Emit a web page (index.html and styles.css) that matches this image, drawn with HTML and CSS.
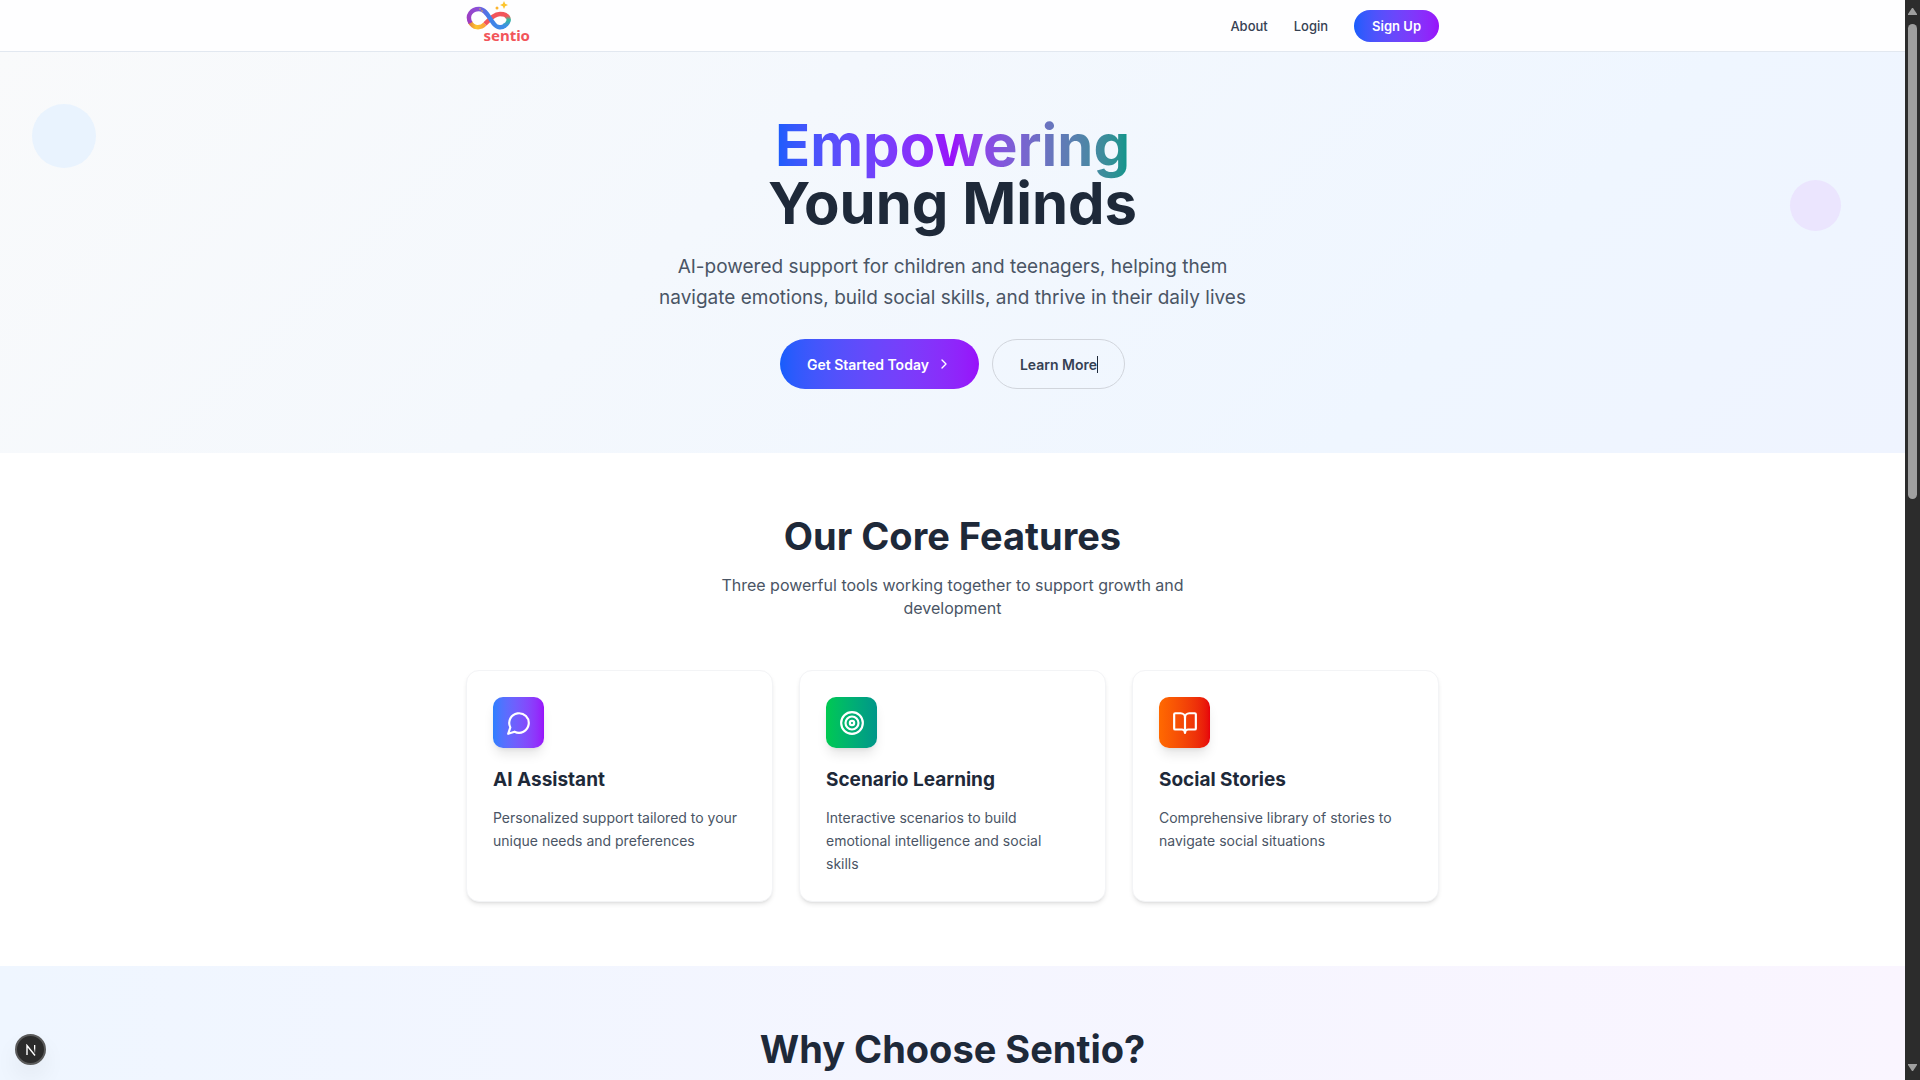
FILE: index.html
```html
<!DOCTYPE html>
<html lang="en">
<head>
<meta charset="utf-8">
<meta name="viewport" content="width=device-width, initial-scale=1">
<title>Sentio</title>
<link rel="stylesheet" href="styles.css">
</head>
<body>
<div class="page">
  <header class="header">
    <div class="container header-row">
      <a class="logo" href="#" aria-label="Sentio home">
        <svg class="logo-mark" viewBox="0 0 48 32" aria-hidden="true">
          <defs>
            <linearGradient id="lg-purple" x1="0" y1="1" x2="1" y2="0"><stop offset="0" stop-color="#a03cc0"/><stop offset="1" stop-color="#8a4fd8"/></linearGradient>
            <linearGradient id="lg-gold" x1="0" y1="0" x2="1" y2="0"><stop offset="0" stop-color="#e8873c"/><stop offset="0.4" stop-color="#fcc52f"/><stop offset="1" stop-color="#f9a03a"/></linearGradient>
            <linearGradient id="lg-blue" x1="0" y1="0" x2="1" y2="0"><stop offset="0" stop-color="#7a58dc"/><stop offset="0.4" stop-color="#3f7fe8"/><stop offset="1" stop-color="#3d8fe6"/></linearGradient>
            <linearGradient id="lg-teal" x1="0" y1="0" x2="0" y2="1"><stop offset="0" stop-color="#f0605a"/><stop offset="0.35" stop-color="#35b99a"/><stop offset="1" stop-color="#3d8fe6"/></linearGradient>
          </defs>
          <g fill="none" stroke-width="4.400">
            <path d="M4 22C7 28 14 29 19 24" stroke="url(#lg-gold)"/>
            <path d="M19 24C24 19 28 14 34 14C38 14 41 15 42 18" stroke="#f2555a"/>
            <path d="M4.500 23C0 15 6 9 13 9" stroke="url(#lg-purple)"/>
            <path d="M13 9C20 9 23 18 28 24C31 28 36 28 39 25.500" stroke="url(#lg-blue)"/>
            <path d="M41 16C44 19 43 23 38 26" stroke="url(#lg-teal)"/>
          </g>
          <path fill="#fcc52f" d="M38 1l1.200 2.800 2.800 1.200-2.800 1.200-1.200 2.800-1.200-2.800-2.800-1.200 2.800-1.200z"/>
          <circle cx="31" cy="8" r="1.500" fill="#fcb52f"/>
          <circle cx="14" cy="9" r="0.700" fill="#fcc52f"/>
          <circle cx="16" cy="11" r="0.700" fill="#fcc52f"/>
        </svg>
        <span class="logo-text">sentio</span>
      </a>
      <nav class="nav">
        <a href="#about">About</a>
        <a href="#login">Login</a>
        <a class="signup" href="#signup">Sign Up</a>
      </nav>
    </div>
  </header>

  <main>
    <section class="hero">
      <span class="bubble bubble-blue"></span>
      <span class="bubble bubble-purple"></span>
      <div class="container">
        <h1><span class="gradient-word">Empowering</span><br>Young Minds</h1>
        <p class="lead">AI-powered support for children and teenagers, helping them navigate emotions, build social skills, and thrive in their daily lives</p>
        <div class="actions">
          <button class="btn btn-primary" type="button">Get Started Today
            <svg class="chevron" viewBox="0 0 24 24" aria-hidden="true"><path d="m9 18 6-6-6-6"/></svg>
          </button>
          <button class="btn btn-outline" type="button"><span class="caret">Learn More</span></button>
        </div>
      </div>
    </section>

    <section class="features">
      <div class="container">
        <h2>Our Core Features</h2>
        <p class="sub">Three powerful tools working together to support growth and development</p>
        <div class="cards">
          <article class="card">
            <div class="icon icon-assistant"><svg viewBox="0 0 24 24" aria-hidden="true"><path d="M7.900 20A9 9 0 1 0 4 16.100L2 22Z"/></svg></div>
            <h3>AI Assistant</h3>
            <p>Personalized support tailored to your unique needs and preferences</p>
          </article>
          <article class="card">
            <div class="icon icon-scenario"><svg viewBox="0 0 24 24" aria-hidden="true"><circle cx="12" cy="12" r="10"/><circle cx="12" cy="12" r="6"/><circle cx="12" cy="12" r="2"/></svg></div>
            <h3>Scenario Learning</h3>
            <p>Interactive scenarios to build emotional intelligence and social skills</p>
          </article>
          <article class="card">
            <div class="icon icon-stories"><svg viewBox="0 0 24 24" aria-hidden="true"><path d="M12 7v14"/><path d="M3 18a1 1 0 0 1-1-1V4a1 1 0 0 1 1-1h5a4 4 0 0 1 4 4 4 4 0 0 1 4-4h5a1 1 0 0 1 1 1v13a1 1 0 0 1-1 1h-6a3 3 0 0 0-3 3 3 3 0 0 0-3-3z"/></svg></div>
            <h3>Social Stories</h3>
            <p>Comprehensive library of stories to navigate social situations</p>
          </article>
        </div>
      </div>
    </section>

    <section class="why">
      <div class="container">
        <h2>Why Choose Sentio?</h2>
      </div>
    </section>
  </main>
</div>

<div class="scrollbar" aria-hidden="true">
  <svg class="arrow" viewBox="0 0 9 8"><path d="M4 0h1l4 6v1H0V6z"/></svg>
  <div class="track"><div class="thumb"></div></div>
  <svg class="arrow" viewBox="0 0 9 8"><path d="M0 0h9v1L5 7H4L0 1z"/></svg>
</div>

<button class="dev-badge" type="button" aria-label="Open developer tools">
  <svg viewBox="0 0 12 12" aria-hidden="true">
    <defs><linearGradient id="fade" x1="0" y1="0" x2="0" y2="1"><stop offset="0.400" stop-color="#fff"/><stop offset="1" stop-color="#fff" stop-opacity="0.100"/></linearGradient></defs>
    <path d="M2 11V1.500L10 11.500" fill="none" stroke="#fff" stroke-width="1.400"/>
    <rect x="9" y="1" width="1.300" height="8" fill="url(#fade)"/>
  </svg>
</button>
</body>
</html>
```
FILE: styles.css
```css
* { box-sizing: border-box; }

body {
  margin: 0;
  display: flex;
  height: 100vh;
  overflow: hidden;
  font-family: Inter, "Liberation Sans", sans-serif;
  color: #1e2939;
  background: #fff;
}

h1, h2, h3, p { margin: 0; }
a { color: inherit; text-decoration: none; }
button { font: inherit; cursor: pointer; }

.page {
  flex: 1;
  min-width: 0;
  overflow: hidden;
}

.container {
  max-width: 1025px;
  margin: 0 auto;
  padding: 0 26px;
}

/* Header */
.header {
  border-bottom: 1px solid #e2e8f0;
  background: #fefeff;
}
.header-row {
  display: flex;
  align-items: center;
  justify-content: space-between;
  height: 51px;
}
.logo {
  position: relative;
  width: 64px;
  height: 51px;
}
.logo-mark {
  display: block;
  width: 48px;
  height: 32px;
}
.logo-text {
  position: absolute;
  right: 0;
  bottom: 7px;
  font: 700 15px/18px "Noto Sans", sans-serif;
  color: #f2555a;
}
.nav {
  display: flex;
  align-items: center;
  gap: 26px;
  font-size: 13px;
  line-height: 18px;
  font-weight: 500;
  color: #364153;
}
.signup {
  padding: 7px 18px;
  border-radius: 16px;
  color: #fff;
  font-weight: 600;
  background: linear-gradient(to right in oklab, #155dfc, #9810fa);
}

/* Hero */
.hero {
  position: relative;
  padding: 64px 0;
  text-align: center;
  background: linear-gradient(135deg, #f9fafb, #eff6ff 75%, #eff4ff);
}
.bubble {
  position: absolute;
  border-radius: 50%;
}
.bubble-blue {
  top: 52px;
  left: 32px;
  width: 64px;
  height: 64px;
  background: #e9f3fe;
}
.bubble-purple {
  top: 128px;
  right: 64px;
  width: 51px;
  height: 51px;
  background: #ebe5fe;
}
h1 {
  font-size: 58px;
  line-height: 58px;
  font-weight: 700;
}
.gradient-word {
  color: transparent;
  background: linear-gradient(to right in oklab, #155dfc, #9810fa, #009689);
  background-clip: text;
  -webkit-background-clip: text;
}
.lead {
  max-width: 616px;
  margin: 19px auto 26px;
  font-size: 19px;
  line-height: 31px;
  color: #4a5565;
}
.actions {
  display: flex;
  justify-content: center;
  gap: 13px;
}
.btn {
  display: flex;
  align-items: center;
  height: 50px;
  padding: 0 27px;
  border: 0;
  border-radius: 25px;
  font-size: 14px;
  font-weight: 600;
}
.btn-primary {
  gap: 7px;
  color: #fff;
  background: linear-gradient(to right in oklab, #155dfc, #9810fa);
}
.chevron {
  width: 16px;
  height: 16px;
  fill: none;
  stroke: currentColor;
  stroke-width: 2;
  stroke-linecap: round;
  stroke-linejoin: round;
}
.btn-outline {
  border: 1px solid #d1d5dc;
  color: #364153;
  background: transparent;
}
.caret {
  position: relative;
}
.caret::after {
  content: "";
  position: absolute;
  top: 0;
  right: -1px;
  width: 1px;
  height: 17px;
  background: #1e2939;
}

/* Features */
.features {
  padding: 64px 0;
}
h2 {
  font-size: 38px;
  line-height: 39px;
  font-weight: 700;
  text-align: center;
}
.sub {
  max-width: 512px;
  margin: 18px auto 50px;
  font-size: 16px;
  line-height: 23px;
  text-align: center;
  color: #4a5565;
}
.cards {
  display: grid;
  grid-template-columns: repeat(3, 1fr);
  gap: 26px;
}
.card {
  padding: 26px;
  border: 1px solid #f3f4f6;
  border-radius: 13px;
  background: #fff;
  box-shadow: 0 3px 5px -1px rgba(0, 0, 0, 0.1), 0 2px 3px -2px rgba(0, 0, 0, 0.1);
}
.icon {
  display: grid;
  place-items: center;
  width: 51px;
  height: 51px;
  border-radius: 10px;
  box-shadow: 0 8px 12px -2px rgba(0, 0, 0, 0.1), 0 3px 5px -3px rgba(0, 0, 0, 0.1);
}
.icon svg {
  width: 26px;
  height: 26px;
  fill: none;
  stroke: #fff;
  stroke-width: 2;
  stroke-linecap: round;
  stroke-linejoin: round;
}
.icon-assistant { background: linear-gradient(to right in oklab, #2b7fff, #9810fa); }
.icon-scenario { background: linear-gradient(to right in oklab, #00c950, #009689); }
.icon-stories { background: linear-gradient(to right in oklab, #ff6900, #e7000b); }
.card h3 {
  margin: 19px 0 13px;
  font-size: 19px;
  line-height: 26px;
  font-weight: 700;
}
.card p {
  padding-right: 6px;
  font-size: 14px;
  line-height: 23px;
  color: #4a5565;
}

/* Why */
.why {
  padding: 64px 0;
  background: linear-gradient(to right, #eff6ff, #faf5ff);
}

/* Scrollbar */
.scrollbar {
  display: flex;
  flex-direction: column;
  align-items: center;
  gap: 8px;
  width: 15px;
  padding: 8px 0;
  background: #2c2c2c;
}
.arrow {
  width: 9px;
  height: 8px;
  fill: #9f9f9f;
}
.track {
  flex: 1;
  width: 9px;
}
.thumb {
  height: 46%;
  border-radius: 5px;
  background: #9f9f9f;
}

/* Developer badge */
.dev-badge {
  position: fixed;
  left: 15px;
  bottom: 15px;
  display: grid;
  place-items: center;
  width: 31px;
  height: 31px;
  padding: 0;
  border: 2px solid #5a5a5a;
  border-radius: 50%;
  background: #2b2b2b;
  box-shadow: 0 12px 24px rgba(0, 0, 0, 0.06);
}
.dev-badge svg {
  width: 12px;
  height: 12px;
}
```
